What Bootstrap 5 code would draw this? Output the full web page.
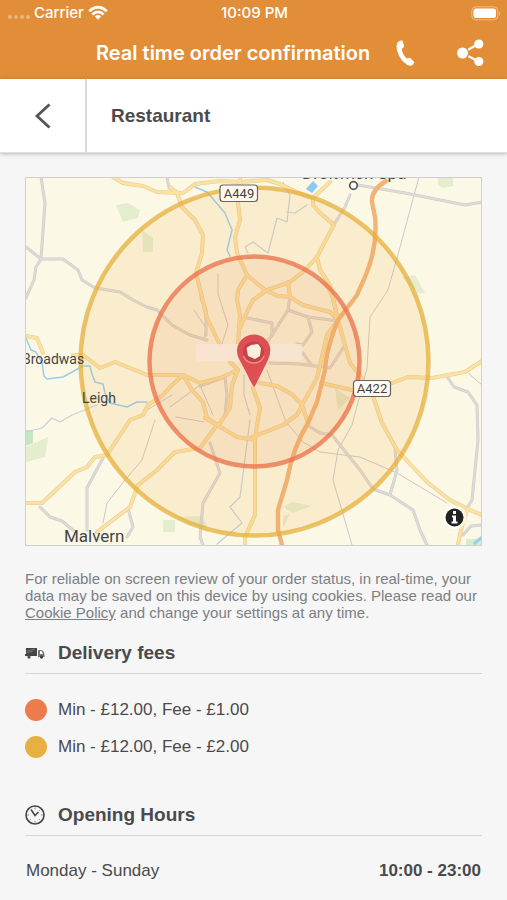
<!DOCTYPE html>
<html lang="en">
<head>
<meta charset="utf-8">
<meta name="viewport" content="width=device-width, initial-scale=1">
<title>Restaurant</title>
<link rel="stylesheet" href="https://cdn.jsdelivr.net/npm/bootstrap@5.3.0/dist/css/bootstrap.min.css">
<style>
body { background: #f6f6f6; color: #4a4a4c; font-family: "Liberation Sans", Arial, sans-serif; font-size: 17px; }
svg { display: block; }
.app-bar { background: #e28e38; color: #fff; font-family: Inter, sans-serif; }
.status-bar { height: 26px; padding: 0 6px 0 8px; font-size: 15px; font-weight: 500; }
.status-side { flex: 1 1 0; }
.signal-dots { gap: 2px; }
.signal-dots i { width: 4px; height: 4px; border-radius: 50%; background: #eab67c; }
.title-bar { height: 53px; padding: 0 23px 0 96px; }
.page-title { font-size: 20px; font-weight: 600; line-height: 24px; }
.sub-bar { height: 74px; background: #fff; border-bottom: 1px solid #e0e0e0; box-shadow: 0 1px 4px rgba(0,0,0,.25); }
.back-btn { width: 87px; border: 0; border-right: 2px solid #dcdcdf; background: #fff; }
.sub-title { font-size: 19px; line-height: 24px; padding-left: 24px; }
.content-area { padding: 24px 25px 11px; }
.map-box { border: 1px solid #cfcfd1; background: #fbf8e6; }
.cookie-note { margin: 24px 0 11px; font-size: 15px; line-height: 17px; color: #7c7f83; }
.cookie-note a { color: inherit; }
.section-head { height: 42px; border-bottom: 1px solid #d6d6d8; gap: 13px; }
.section-head h2 { font-size: 19px; line-height: 24px; }
.section-head svg { width: 20px; }
.fee-list { margin: 17px 0 29px; }
.fee-list li { height: 37px; gap: 11px; }
.fee-dot { width: 22px; height: 22px; }
.dot-near { background: #ee7b4c; }
.dot-far { background: #e8af41; }
.hours-table { margin: 17px 0 0; width: 100%; }
.hours-table th, .hours-table td { height: 36px; padding: 0 1px; }
.map-box text { font-family: Roboto, sans-serif; fill: #444; }
.map-box polyline, .map-box .line { fill: none; stroke-linejoin: round; stroke-linecap: round; }
</style>
<script defer src="https://cdn.jsdelivr.net/npm/bootstrap@5.3.0/dist/js/bootstrap.bundle.min.js"></script>
</head>
<body>
<header class="app-bar">
  <div class="status-bar d-flex align-items-center">
    <div class="status-side d-flex align-items-center">
      <span class="signal-dots d-flex pt-2"><i></i><i></i><i></i><i></i></span>
      <span class="ms-1 me-1">Carrier</span>
      <svg width="20" height="16" viewBox="0 0 20 16" aria-hidden="true"><g fill="none" stroke="#fff" stroke-width="2.7"><path d="M1.2 6.2Q10-1.8 18.8 6.2"/><path d="M4.3 9.5Q10 4.3 15.7 9.5"/></g><path d="M6.8 11.3Q10 8.7 13.2 11.3L10 14.8Z" fill="#fff"/></svg>
    </div>
    <span>10:09 PM</span>
    <div class="status-side d-flex justify-content-end">
      <svg width="30" height="15" viewBox="0 0 30 15" aria-label="Battery"><rect x=".8" y=".8" width="26" height="13" rx="4" fill="none" stroke="#efbd85"/><rect x="2.5" y="2.5" width="22.5" height="9.5" rx="2.5" fill="#fff"/><path d="M28 5v5q2-2.500 0-5" fill="#efbd85"/></svg>
    </div>
  </div>
  <div class="title-bar d-flex align-items-center justify-content-between">
    <h1 class="page-title mb-0 text-nowrap">Real time order confirmation</h1>
    <a href="#" aria-label="Call"><svg width="20" height="28" viewBox="0 0 20 28"><path d="M2.500 3.500Q4.500 1 7.500 1.600L9.200 7.300Q9 8.500 6.800 9.700Q7 14.800 11.800 19.500L15 18.700L19.400 23.200Q18.500 26 16 26.800Q13 27.200 9 23.500Q4 18.500 2.200 12Q.8 6.500 2.500 3.500Z" fill="#fff"/></svg></a>
    <a href="#" class="ms-3" aria-label="Share"><svg width="28" height="28" viewBox="0 0 28 28"><path d="M6.500 14 22.500 4.800M6.500 14 22.500 22.500" stroke="#fff" stroke-width="2.200"/><circle cx="6.500" cy="14" r="6.800" fill="#e28e38"/><circle cx="6.500" cy="14" r="5.500" fill="#fff"/><circle cx="22.800" cy="5" r="4.600" fill="#fff"/><circle cx="22.800" cy="22.500" r="4.600" fill="#fff"/></svg></a>
  </div>
</header>
<div class="sub-bar d-flex align-items-stretch">
  <button type="button" class="back-btn d-flex align-items-center justify-content-center" aria-label="Back"><svg width="18" height="26" viewBox="0 0 18 26"><path d="M15.500 1.500 3 13 15.500 24.500" fill="none" stroke="#555" stroke-width="2.800"/></svg></button>
  <h2 class="sub-title fw-bold mb-0 align-self-center">Restaurant</h2>
</div>

<main class="content-area">
  <div class="map-box">
    <svg class="w-100 h-auto" viewBox="26 178 455 367" role="img" aria-label="Delivery area map">
      <defs>
        <g id="yellow-roads">
          <polyline points="113,177 123,183 143,186 157,192 183,193 195,184 220,181 240,182 267,180 280,184 303,195 313,198 330,182"/>
          <polyline points="313,198 313,205 320,213 334,225 330,232 317,257 303,272 290,282 267,290 253,300 247,312 239,330 238,345"/>
          <polyline points="317,257 320,270 330,285 338,320"/>
          <polyline points="240,178 238,203 240,220 235,237 237,253 247,275 265,290"/>
          <polyline points="247,275 238,290 237,300 240,315 239,330"/>
          <polyline points="170,187 177,193 182,207 195,220 203,235 202,253 196,273 201,293 207,318 220,345"/>
          <polyline points="288,282 290,297 303,305 330,312 338,320"/>
          <polyline points="265,290 278,296 290,297"/>
          <polyline points="26,336 37,338 43,353"/>
          <polyline points="73,355 83,355 100,368 115,362 147,375 183,375 200,383 220,378 238,370 230,362"/>
          <polyline points="183,375 170,387 163,395 148,405 143,415 130,420 107,455 95,457 87,467 75,472 42,503 26,503"/>
          <polyline points="183,375 192,390 203,402 207,418 217,425 220,423 230,408 232,385 238,370"/>
          <polyline points="253,388 260,408 257,425 255,440 255,487 255,515 245,537 245,545"/>
          <polyline points="260,383 277,386 293,395 302,405 308,423"/>
          <polyline points="250,438 283,425 297,415 302,405 317,378 327,335 338,320 332,295 325,283"/>
          <polyline points="338,320 350,363 358,373 372,393 382,423 397,450 427,482 450,500 470,510 482,515"/>
          <polyline points="321,383 352,390 392,383 408,377 432,378 465,372 482,361"/>
          <polyline points="217,425 200,448 175,452 157,470 138,485 130,507 97,532"/>
          <polyline points="205,418 217,425 237,437 255,440"/>
          <polyline points="467,510 461,530 458,545"/>
        </g>
        <g id="gray-roads">
          <polyline points="41,177 45,203 41,259 26,247"/>
          <polyline points="26,298 34,280 36,267 41,259 63,259 78,270 82,280 95,288 120,292 133,300 147,307 157,310 172,325 190,335 207,340"/>
          <polyline points="167,177 169,188"/><polyline points="201,298 206,310 206,335"/>
          <polyline points="290,297 288,310 272,335 262,350"/><polyline points="247,318 272,323 272,335"/>
          <polyline points="288,310 308,317 338,321"/><polyline points="308,317 312,332 303,345 297,344"/>
          <polyline points="303,353 312,366"/><polyline points="270,363 300,364 330,368 345,345"/>
          <polyline points="200,386 225,377 227,395 225,415"/>
          <polyline points="352,187 358,185 405,193 465,205 482,202"/><polyline points="350,195 345,207 335,223"/>
          <polyline points="307,425 320,433 332,435 360,470 373,489 390,495 413,510 420,530 427,545"/>
          <polyline points="395,450 397,470 390,495"/><polyline points="448,378 454,387 468,392 477,405 478,440 472,500 467,508"/>
          <polyline points="482,525 471,526 463,535"/><polyline points="210,443 220,473 203,503 200,537 203,545"/>
          <polyline points="103,458 87,488 87,530"/><polyline points="40,507 50,517 62,521 73,530"/><polyline points="128,508 133,527 127,537"/>
        </g>
      </defs>
      <g fill="#e4edcd">
        <path d="M116 205l12-2 12 7-2 8-15 4zM142 230l11 8v14h-10zM438 178h15v8l-10 2-5-3zM402 277l13-2 10 18h-8zM335 388l15 10-12 12zM26 447l22-10-3 20-19 5zM163 520h12v12h-12zM177 517l25-1 6 12-18-3zM283 507l9-5 20 4-19 7zM283 516l7-2-7 14z"/>
        <path d="M26 430h7v13l-7 3z" fill="#c5e6c4"/><path d="M466 539h15v6h-15z" fill="#d6eccd"/>
      </g>
      <g class="line" stroke="#cac8c9" stroke-width="1">
        <polyline points="419,177 397,258 388,290 370,317 367,368 352,425 338,450 333,480 352,545"/>
        <polyline points="287,423 303,442 320,452 360,457 397,473 447,503"/>
        <polyline points="155,420 142,460 125,480 107,503 103,523"/>
        <polyline points="218,274 218,294 228,325 222,344"/>
        <polyline points="267,370 287,425"/><polyline points="170,407 200,385 213,415"/>
        <polyline points="176,417 204,422"/><polyline points="147,410 172,395"/>
        <polyline points="194,310 206,328 204,340"/><polyline points="468,373 482,385"/>
      </g>
      <g class="line" stroke="#c8cfda" stroke-width="1.200">
        <polyline points="283,182 290,195 287,222 277,218 268,253 253,242 245,247 248,253"/>
        <polyline points="287,212 295,213 307,205"/>
        <polyline points="26,432 42,428 52,418 60,422 72,415 97,405"/>
        <polyline points="250,420 240,497 230,507 242,523 217,544"/>
        <polyline points="244,375 244,395 250,415"/>
      </g>
      <g stroke="#97cced" stroke-width="1.500">
        <polyline points="195,187 207,192 225,213 232,230 227,250 230,256"/>
        <polyline points="26,338 31,350 36,352 42,363 44,376 47,379 63,377 83,366 90,366 92,374 95,382 103,384 105,393 110,403 127,407 137,402 147,402"/>
        <polyline points="475,543 482,537" stroke-width="3"/>
      </g>
      <path d="M306 189l7-8 5 5-6 7z" fill="#8cc9f3"/>
      <use href="#gray-roads" stroke="#cfccca" stroke-width="3"/>
      <use href="#gray-roads" stroke="#dedbd6" stroke-width="1.800"/>
      <use href="#yellow-roads" stroke="#e6cd9a" stroke-width="4"/>
      <use href="#yellow-roads" stroke="#fce2a0" stroke-width="2.800"/>
      <path class="line" d="M386 181Q371 190 372 202L375 217Q378 247 365 277L357 295L338 320Q326 350 325 370L317 402L308 423Q293 447 287 480L278 510V530L282 545" stroke="#f0b478" stroke-width="4.400"/>
      <circle cx="254.500" cy="361.500" r="174" fill="#efad40" fill-opacity=".14" stroke="#e4ad35" stroke-opacity=".72" stroke-width="4.500"/>
      <circle cx="254.500" cy="361.500" r="105" fill="#f08c50" fill-opacity=".13" stroke="#e96f48" stroke-opacity=".75" stroke-width="4.500"/>
      <rect x="196" y="344" width="106" height="17" rx="2" fill="#f8e4d5" fill-opacity=".85"/>
      <g fill="#fffaf0" stroke="#666460" stroke-width="1.200"><rect x="220" y="185" width="37.500" height="16.500" rx="3"/><rect x="353.500" y="380.500" width="37" height="16" rx="3"/></g>
      <g font-size="13" text-anchor="middle"><text x="239" y="198">A449</text><text x="372" y="393">A422</text></g>
      <text x="22" y="364" font-size="14">Broadwas</text>
      <text x="82" y="403" font-size="14">Leigh</text>
      <text x="64" y="542" font-size="17">Malvern</text>
      <text x="302" y="179" font-size="17">Droitwich Spa</text>
      <circle cx="353.500" cy="185.500" r="3.800" fill="#fff" stroke="#5b5b5b" stroke-width="1.800"/>
      <path d="M254 387Q251 383 247 374L239 359Q236 353 237.500 347A16.800 16.800 0 0 1 270 347Q271 354 268 360L259 378Q256 385 254 387Z" fill="#dc5053"/>
      <circle cx="253.500" cy="352" r="10.500" fill="#c94045"/>
      <path d="M243.500 356A11 11 0 0 0 264 356" fill="none" stroke="#eb8d88" stroke-width="1.500"/>
      <path d="M246.500 348L251 345L258 344L261 348L260 356L255 359L248 356Z" fill="#f9efdf"/>
      <circle cx="454.500" cy="517.500" r="12" fill="#fff" opacity=".65"/><circle cx="454.500" cy="517.500" r="9" fill="#222"/>
      <path d="M453 511h3v3h-3zM452 515.500h4v6h1.500v2h-6v-2h1.500v-4h-1z" fill="#fff"/>
    </svg>
  </div>

  <p class="cookie-note">For reliable on screen review of your order status, in real-time, your data may be saved on this device by using cookies. Please read our <a href="#">Cookie Policy</a> and change your settings at any time.</p>

  <section>
    <div class="section-head d-flex align-items-center">
      <svg height="12" viewBox="0 0 20 12" aria-hidden="true"><path d="M1 1h11v8H0V7h1z" fill="#444"/><path d="M14 3h3q2 1 2.500 4v3H13V3z" fill="#777"/><path d="M15 4h1.500l1.500 3h-3z" fill="#fff"/><path d="M2 4l8-2M1 6l7-2" stroke="#777"/><circle cx="4" cy="10" r="1.700" fill="#555"/><circle cx="16.500" cy="10" r="1.700" fill="#444"/></svg>
      <h2 class="fw-bold mb-0">Delivery fees</h2>
    </div>
    <ul class="fee-list list-unstyled">
      <li class="d-flex align-items-center"><span class="fee-dot dot-near rounded-circle"></span>Min - £12.00, Fee - £1.00</li>
      <li class="d-flex align-items-center"><span class="fee-dot dot-far rounded-circle"></span>Min - £12.00, Fee - £2.00</li>
    </ul>
  </section>

  <section>
    <div class="section-head d-flex align-items-center">
      <svg height="20" viewBox="0 0 20 20" aria-hidden="true"><circle cx="10" cy="10" r="9" fill="none" stroke="#444" stroke-width="1.600"/><path d="M6 4.500 10 10.500 13.500 7" fill="none" stroke="#444" stroke-width="1.500"/><path d="M10 2.500v1.500M10 16v1.500M2.500 10H4M16 10h1.500M4.700 15.300l1-1M14.300 14.300l1 1M14.500 5.500l.8-.8" stroke="#777"/></svg>
      <h2 class="fw-bold mb-0">Opening Hours</h2>
    </div>
    <table class="hours-table">
      <tbody><tr><th scope="row" class="fw-normal">Monday - Sunday</th><td class="text-end fw-bold">10:00 - 23:00</td></tr></tbody>
    </table>
  </section>
</main>
</body>
</html>
